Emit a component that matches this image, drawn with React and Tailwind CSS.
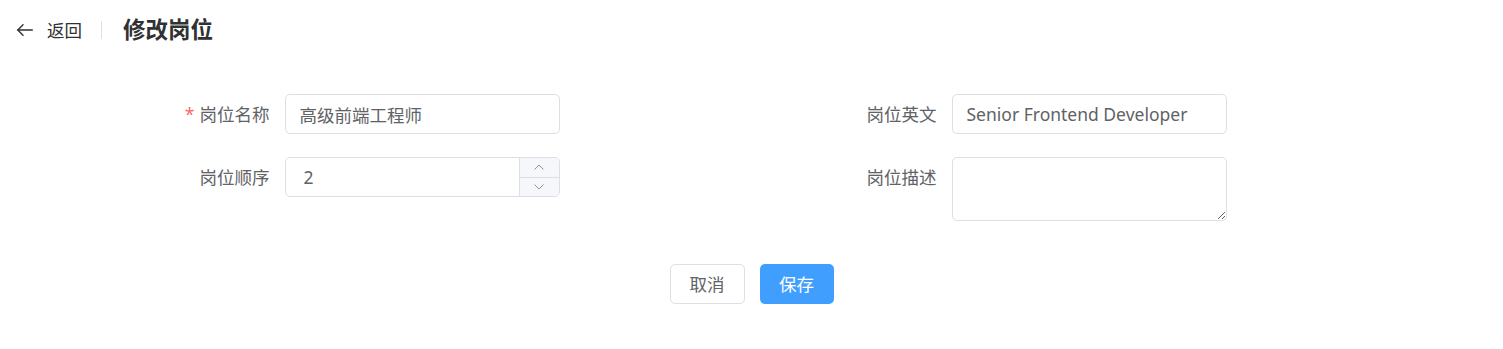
import { useState } from "react";

const font = { fontFamily: '"Noto Sans", "Noto Sans CJK SC", sans-serif' };

const Field = ({ label, required, children }) => (
  <div className="flex">
    <label className="w-[200px] shrink-0 pr-[15px] h-[40px] leading-[40px] text-right text-[17.5px] text-[#606266]">
      {required && <span className="text-[#f56c6c] mr-[5px]">*</span>}
      {label}
    </label>
    {children}
  </div>
);

const App = () => {
  const [name, setName] = useState("高级前端工程师");
  const [en, setEn] = useState("Senior Frontend Developer");
  const [order, setOrder] = useState(2);
  const [desc, setDesc] = useState("");

  return (
    <div className="bg-white min-h-screen" style={font}>
      {/* header */}
      <div className="flex items-center h-[60px] pl-[17px]">
        <button className="flex items-center text-[#303133]">
          <svg width="16" height="16" viewBox="0 0 16 16" fill="none" stroke="currentColor" strokeWidth="1.4" strokeLinecap="round" strokeLinejoin="round">
            <path d="M15.3 8H0.8" />
            <path d="M6 2.8L0.8 8L6 13.2" />
          </svg>
          <span className="ml-[14px] text-[17.5px]">返回</span>
        </button>
        <div className="w-px h-[18px] bg-[#dcdfe6] ml-[19px] mr-[21px]" />
        <h1 className="text-[22.5px] font-bold text-[#303133]">修改岗位</h1>
      </div>

      {/* form */}
      <div className="mt-[34px] mx-auto w-[1334px] grid grid-cols-2 gap-y-[23px]">
        <Field label="岗位名称" required>
          <input
            value={name}
            onChange={(e) => setName(e.target.value)}
            className="w-[275px] h-[40px] px-[14px] border border-[#dcdfe6] rounded-[5px] text-[17.5px] text-[#606266] outline-none"
          />
        </Field>
        <Field label="岗位英文">
          <input
            value={en}
            onChange={(e) => setEn(e.target.value)}
            className="w-[275px] h-[40px] px-[14px] border border-[#dcdfe6] rounded-[5px] text-[17.5px] text-[#606266] outline-none"
          />
        </Field>
        <Field label="岗位顺序">
          <div className="w-[275px] h-[40px] flex border border-[#dcdfe6] rounded-[5px] overflow-hidden">
            <input
              value={order}
              onChange={(e) => setOrder(e.target.value)}
              className="flex-1 min-w-0 pl-[18px] text-[17.5px] text-[#606266] outline-none"
            />
            <div className="w-[40px] flex flex-col border-l border-[#dcdfe6] bg-[#f5f7fa] text-[#909399]">
              <button
                onClick={() => setOrder(Number(order) + 1)}
                className="flex-1 flex items-center justify-center border-b border-[#dcdfe6]"
              >
                <svg width="14" height="14" viewBox="0 0 14 14" fill="none" stroke="currentColor" strokeWidth="1">
                  <path d="M2.5 9.5L7 5l4.5 4.5" />
                </svg>
              </button>
              <button
                onClick={() => setOrder(Number(order) - 1)}
                className="flex-1 flex items-center justify-center"
              >
                <svg width="14" height="14" viewBox="0 0 14 14" fill="none" stroke="currentColor" strokeWidth="1">
                  <path d="M2.5 4.5L7 9l4.5-4.5" />
                </svg>
              </button>
            </div>
          </div>
        </Field>
        <Field label="岗位描述">
          <textarea
            value={desc}
            onChange={(e) => setDesc(e.target.value)}
            className="w-[275px] h-[64px] px-[14px] py-[6px] border border-[#dcdfe6] rounded-[5px] text-[17.5px] text-[#606266] outline-none resize-y"
          />
        </Field>
      </div>

      {/* actions */}
      <div className="flex justify-center gap-[15px] mt-[43px]">
        <button className="w-[75px] h-[40px] border border-[#dcdfe6] rounded-[5px] text-[17.5px] text-[#606266] bg-white">
          取消
        </button>
        <button className="w-[74px] h-[40px] rounded-[5px] text-[17.5px] text-white bg-[#409eff]">
          保存
        </button>
      </div>
    </div>
  );
};

export default App;
